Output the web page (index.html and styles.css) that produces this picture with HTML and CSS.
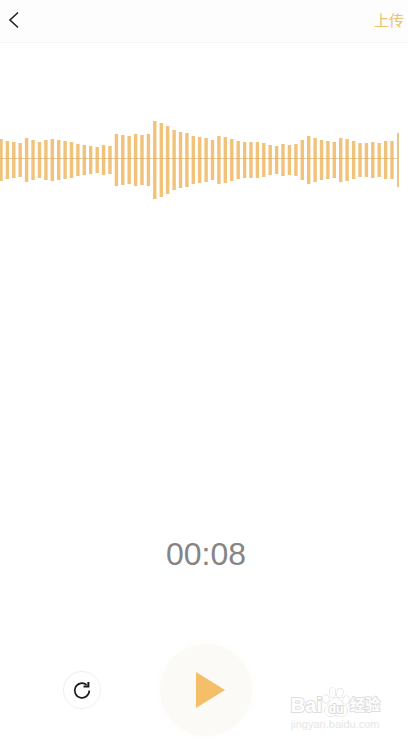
FILE: index.html
```html
<!DOCTYPE html>
<html lang="zh-CN">
<head>
  <meta charset="UTF-8">
  <title>录音</title>
  <meta name="viewport" content="width=device-width, initial-scale=1">
  <link rel="stylesheet" href="styles.css">
</head>
<body>

  <header class="topbar">
    <button class="topbar-back" type="button" aria-label="返回">
      <svg width="12" height="18" viewBox="0 0 12 18" aria-hidden="true">
        <path d="M10 1.5L2 9l8 7.5" fill="none" stroke="#222" stroke-width="1.6"/>
      </svg>
    </button>
    <button class="topbar-upload" type="button">上传</button>
  </header>

  <main class="recorder">
    <svg class="waveform" viewBox="0 0 408 80" role="img" aria-label="波形">
      <path class="waveform-bars"/>
      <path class="waveform-axis" d="M0 39.5H399"/>
      <path class="waveform-cursor" d="M398 14V68"/>
    </svg>

    <p class="timer">00:08</p>

    <div class="controls">
      <button class="restart" type="button" aria-label="重新录制">
        <svg width="20" height="20" viewBox="0 0 20 20" aria-hidden="true">
          <path d="M17.3 10.5a7.3 7.3 0 1 1-2.6-5.6" fill="none" stroke="#1c1c1c" stroke-width="1.7"/>
          <path d="M16.4 2V6.5H11.5" fill="none" stroke="#1c1c1c" stroke-width="2"/>
        </svg>
      </button>
      <button class="play" type="button" aria-label="播放">
        <svg width="30" height="36" viewBox="0 0 30 36" aria-hidden="true">
          <path d="M0 0L29 18L0 36z" fill="#f4bf68"/>
        </svg>
      </button>
    </div>
  </main>

  <div class="watermark">
    <div class="watermark-brand">
      <span>Bai</span>
      <svg width="28" height="30" viewBox="0 0 28 30" aria-hidden="true">
        <g fill="#fff" stroke="#d6d6d6">
          <ellipse cx="4" cy="12" rx="3" ry="4" transform="rotate(-15 4 12)"/>
          <ellipse cx="10.5" cy="5.5" rx="3" ry="4.5"/>
          <ellipse cx="18" cy="6" rx="3" ry="4.5" transform="rotate(10 18 6)"/>
          <ellipse cx="24" cy="13" rx="3" ry="4" transform="rotate(15 24 13)"/>
          <path d="M14 11c-4 0-5 4-8 7-5 4-4 10 1 11 3 .3 4-.5 7-.5s4 .8 7 .5c5-1 6-7 1-11-3-3-4-7-8-7z"/>
        </g>
        <text class="watermark-du" x="14" y="26" text-anchor="middle">du</text>
      </svg>
      <span class="watermark-cn">经验</span>
    </div>
    <div class="watermark-url">jingyan.baidu.com</div>
  </div>

  <script>
    // Height of each bar above and below the axis
    var levels = [
      21, 19, 18, 17, 22, 20, 18, 20, 21, 20, 19, 18, 16, 15, 14, 13, 15, 14,
      26, 25, 24, 26, 25, 26, 39, 37, 34, 30, 28, 27, 24, 23, 22, 20, 24, 23,
      21, 19, 18, 18, 18, 17, 15, 14, 16, 15, 16, 20, 24, 22, 20, 19, 18, 22,
      21, 19, 17, 17, 18, 17, 19, 19
    ];
    var axis = 41,
        step = 6.41,
        path = '';

    for (var i = 0; i < levels.length; i++) {
      path += 'M' + (1 + i * step).toFixed(1) + ' ' + (axis - levels[i]) + 'v' + levels[i] * 2;
    }
    document.querySelector('.waveform-bars').setAttribute('d', path);
  </script>
</body>
</html>
```
FILE: styles.css
```css
body {
  display: flex;
  flex-direction: column;
  position: relative;
  min-height: 100vh;
  margin: 0;
  background-color: #fff;
  font-family: "Liberation Sans", "Noto Sans CJK SC", sans-serif;
}

button {
  display: flex;
  align-items: center;
  justify-content: center;
  margin: 0;
  padding: 0;
  border: 0;
  background: none;
  font: inherit;
  cursor: pointer;
}

.topbar {
  display: flex;
  align-items: flex-start;
  justify-content: space-between;
  height: 42px;
  padding: 0 4px 0 8px;
  border-bottom: 1px solid #f5f5f5;
  background-color: #fdfdfd;
}
.topbar-back {
  height: 40px;
}
.topbar-upload {
  height: 38px;
  color: #ecc070;
  font-size: 15px;
}

.recorder {
  display: flex;
  flex: 1;
  flex-direction: column;
  padding: 76px 0 5px;
}

.waveform {
  display: block;
  width: 100%;
}
.waveform-bars {
  fill: none;
  stroke: #f1c27a;
  stroke-width: 3.4;
}
.waveform-axis {
  stroke: #dba962;
  stroke-width: 1;
  stroke-opacity: .6;
}
.waveform-cursor {
  stroke: #e9c687;
  stroke-width: 2;
}

.timer {
  margin: auto 0 0;
  padding-left: 4px;
  color: #858585;
  font-size: 32px;
  line-height: 40px;
  text-align: center;
}

.controls {
  display: grid;
  grid-template-columns: 1fr auto 1fr;
  align-items: center;
  margin-top: 70px;
  padding-left: 4px;
}
.restart {
  justify-self: center;
  width: 38px;
  height: 38px;
  border: 1px solid #efefef;
  border-radius: 50%;
}
.play {
  width: 92px;
  height: 92px;
  padding-left: 10px;
  border-radius: 50%;
  background-color: #fbfaf6;
  box-shadow: 0 0 0 4px #fefefd;
}

/* Site mark over the lower right corner */
.watermark {
  position: absolute;
  right: 28px;
  bottom: 10px;
  color: #fff;
  pointer-events: none;
  -webkit-text-stroke: 2px #dedede;
  paint-order: stroke fill;
}
.watermark-brand {
  display: flex;
  align-items: flex-end;
  height: 30px;
  font-size: 20px;
  font-weight: bold;
  line-height: 24px;
}
.watermark-cn {
  font-size: 15px;
}
.watermark-du {
  fill: #fff;
  stroke: #dcdcdc;
  stroke-width: 2px;
  font-size: 12px;
}
.watermark-url {
  color: #e6e6e6;
  font-size: 11px;
  line-height: 14px;
  -webkit-text-stroke: 0;
}
```
